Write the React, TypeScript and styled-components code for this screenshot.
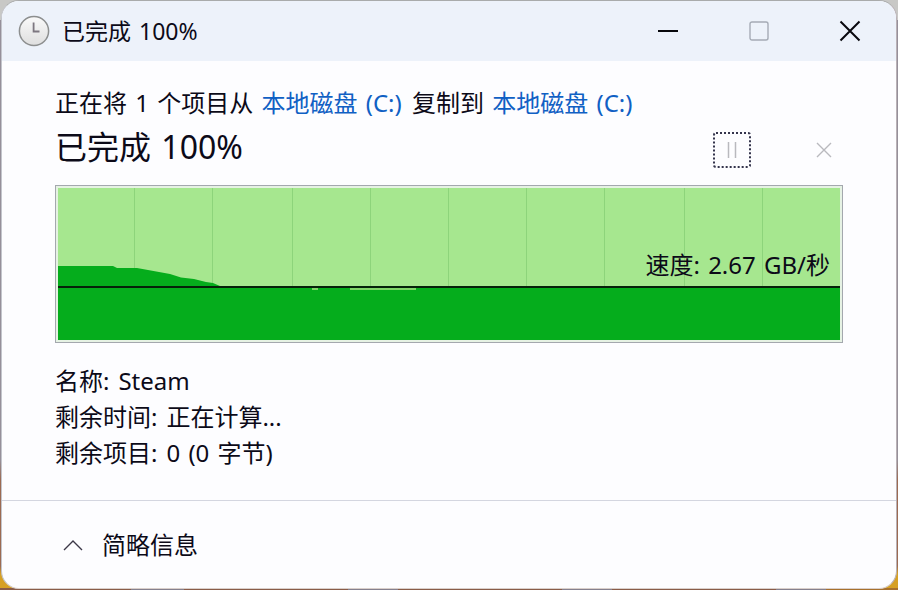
import React from "react";
import styled, { createGlobalStyle } from "styled-components";

const GlobalStyle = createGlobalStyle`
  * { box-sizing: border-box; }
  body {
    margin: 0;
    font-family: "Noto Sans", "Noto Sans CJK SC", sans-serif;
    color: #0c0a18;
  }
  button { font: inherit; color: inherit; }
`;

const Desktop = styled.div`
  display: flex;
  min-height: 100vh;
  padding: 0 1px 1px;
  background:
    linear-gradient(90deg, #8a5c48 0 131px, #85808e 131px 184px, #8a5c48 184px 348px, #85808e 348px 398px,
      #8a5c48 398px 562px, #85808e 562px 612px, #8a5c48 612px 776px, #85808e 776px 826px, #a8702c 826px)
      left bottom / 100% 2px no-repeat,
    linear-gradient(180deg, #c8c8c6 0 20px, #96909a 20px 460px, #9c6a52 480px calc(100% - 24px), #d6a024 calc(100% - 16px));
`;

const Dialog = styled.main`
  flex: 1;
  display: flex;
  flex-direction: column;
  min-width: 0;
  overflow: hidden;
  border: 1px solid;
  border-color: #a9abab #b9b1b6 #d9cfcb #c3c5cc;
  border-radius: 18px;
  background: #fdfdff;
`;

const TitleBar = styled.header`
  display: flex;
  align-items: center;
  height: 60px;
  padding: 0 1px 0 16px;
  background: #edf2fa;
`;

const Title = styled.h1`
  flex: 1;
  margin: 0 0 0 12px;
  font-size: 23px;
  font-weight: 400;
  line-height: 32px;
`;

const WindowButton = styled.button`
  display: grid;
  place-items: center;
  width: 91px;
  height: 60px;
  padding: 0;
  border: 0;
  background: none;
`;

const Content = styled.section`
  flex: 1;
  padding: 24px 53px 0;
`;

const WordRow = styled.span`
  display: inline-flex;
  gap: 2px;
  white-space: pre;
`;

const Route = styled.p`
  display: flex;
  gap: 2px;
  margin: 0;
  font-size: 24px;
  line-height: 36px;
  white-space: pre;
`;

const DriveLink = styled.a`
  color: #1060c4;
  text-decoration: none;
`;

const StatusRow = styled.div`
  display: flex;
  align-items: center;
  gap: 54px;
  height: 52px;
`;

const Status = styled.h2`
  flex: 1;
  margin: 0;
  font-size: 32px;
  font-weight: 400;
  line-height: 44px;
`;

const ActionButton = styled.button<{ $focused?: boolean }>`
  display: grid;
  place-items: center;
  width: 38px;
  height: 36px;
  margin-top: 6px;
  padding: 0;
  border: 2px dotted ${(p) => (p.$focused ? "#34344c" : "transparent")};
  border-radius: 3px;
  background: none;
`;

const Chart = styled.figure`
  position: relative;
  margin: 12px 0 0;
  padding: 2px;
  border: 1px solid #a4a8ae;
  background: #e6f2e4;
`;

const Plot = styled.svg`
  display: block;
  width: 100%;
  height: 152px;
`;

const Speed = styled.figcaption`
  position: absolute;
  right: 12px;
  top: 61px;
  font-size: 24px;
  line-height: 36px;
`;

const Details = styled.dl`
  margin: 20px 0 28px;
  font-size: 24px;
  line-height: 36px;
`;

const Detail = styled.div`
  display: flex;
  gap: 9px;
`;

const Term = styled.dt`
  margin: 0;
`;

const Value = styled.dd`
  margin: 0;
`;

const Footer = styled.footer`
  display: flex;
  align-items: center;
  height: 88px;
  padding: 0 61px;
  border-top: 1px solid #d4d6e0;
`;

const ToggleButton = styled.button`
  display: flex;
  align-items: center;
  gap: 19px;
  padding: 0;
  border: 0;
  background: none;
  font-size: 24px;
  line-height: 36px;
`;

const details = [
  ["名称:", "Steam"],
  ["剩余时间:", "正在计算..."],
  ["剩余项目:", "0 (0 字节)"],
];

const gridLines = [77, 155, 235, 313, 391, 469, 547, 627, 705];

function Words({ text }: { text: string }) {
  return (
    <WordRow>
      {text.split(/(?<= )/).map((word, i) => (
        <span key={i}>{word}</span>
      ))}
    </WordRow>
  );
}

function ClockIcon() {
  return (
    <svg width="32" height="32" viewBox="0 0 32 32" aria-hidden="true">
      <defs>
        <linearGradient id="face" x1="0" y1="0" x2="0" y2="1">
          <stop offset="0" stopColor="#fafafa" />
          <stop offset="1" stopColor="#dedede" />
        </linearGradient>
      </defs>
      <circle cx="16" cy="16" r="14.6" fill="url(#face)" stroke="#8d8f8f" strokeWidth="1.5" />
      <path d="M15.6 7.500v9H21.500" fill="none" stroke="#7d7780" strokeWidth="1.8" />
    </svg>
  );
}

export default function App() {
  return (
    <>
      <GlobalStyle />
      <Desktop>
        <Dialog>
          <TitleBar>
            <ClockIcon />
            <Title>
              <Words text="已完成 100%" />
            </Title>
            <WindowButton aria-label="最小化">
              <svg width="20" height="20" viewBox="0 0 20 20">
                <path d="M0 10h20" stroke="#08080c" strokeWidth="2" />
              </svg>
            </WindowButton>
            <WindowButton aria-label="最大化" disabled>
              <svg width="20" height="20" viewBox="0 0 20 20">
                <rect x="1" y="1" width="18" height="18" rx="2" fill="none" stroke="#a5abb5" strokeWidth="1.4" />
              </svg>
            </WindowButton>
            <WindowButton aria-label="关闭">
              <svg width="22" height="22" viewBox="0 0 22 22">
                <path d="M1.500 1.500l19 19M20.500 1.500l-19 19" stroke="#08080c" strokeWidth="2" />
              </svg>
            </WindowButton>
          </TitleBar>
          <Content>
            <Route>
              <Words text="正在将 1 个项目从 " />
              <DriveLink href="#source">
                <Words text="本地磁盘 (C:)" />
              </DriveLink>
              <Words text=" 复制到 " />
              <DriveLink href="#target">
                <Words text="本地磁盘 (C:)" />
              </DriveLink>
            </Route>
            <StatusRow>
              <Status>
                <Words text="已完成 100%" />
              </Status>
              <ActionButton $focused aria-label="暂停">
                <svg width="12" height="16" viewBox="0 0 12 16">
                  <path d="M2.500 0v16M9.500 0v16" stroke="#b9b9be" strokeWidth="1.5" />
                </svg>
              </ActionButton>
              <ActionButton aria-label="取消">
                <svg width="16" height="16" viewBox="0 0 16 16">
                  <path d="M1 1l14 14M15 1L1 15" stroke="#b9b9be" strokeWidth="1.4" />
                </svg>
              </ActionButton>
            </StatusRow>
            <Chart>
              <Plot viewBox="0 0 782 152" preserveAspectRatio="none" aria-hidden="true">
                <rect width="782" height="152" fill="#a6e78f" />
                {gridLines.map((x) => (
                  <path key={x} d={`M${x - 0.5} 0V98`} stroke="#8dd47b" strokeWidth="1" />
                ))}
                <path
                  d="M0 78H55L59 80H79L101 84L112 86L123 89.500L136 91L148 94L155 95L162 98H782V152H0Z"
                  fill="#05ad1c"
                />
                <path d="M0 99H782" stroke="#06220a" strokeWidth="2" />
                <path d="M254 101H260M292 101H358" stroke="#7fd468" strokeWidth="2" />
              </Plot>
              <Speed>
                <Words text="速度: 2.67 GB/秒" />
              </Speed>
            </Chart>
            <Details>
              {details.map(([term, value]) => (
                <Detail key={term}>
                  <Term>{term}</Term>
                  <Value>
                    <Words text={value} />
                  </Value>
                </Detail>
              ))}
            </Details>
          </Content>
          <Footer>
            <ToggleButton aria-expanded="true">
              <svg width="20" height="12" viewBox="0 0 20 12" aria-hidden="true">
                <path d="M1 11l9-9 9 9" fill="none" stroke="#3c3848" strokeWidth="1.4" />
              </svg>
              简略信息
            </ToggleButton>
          </Footer>
        </Dialog>
      </Desktop>
    </>
  );
}
